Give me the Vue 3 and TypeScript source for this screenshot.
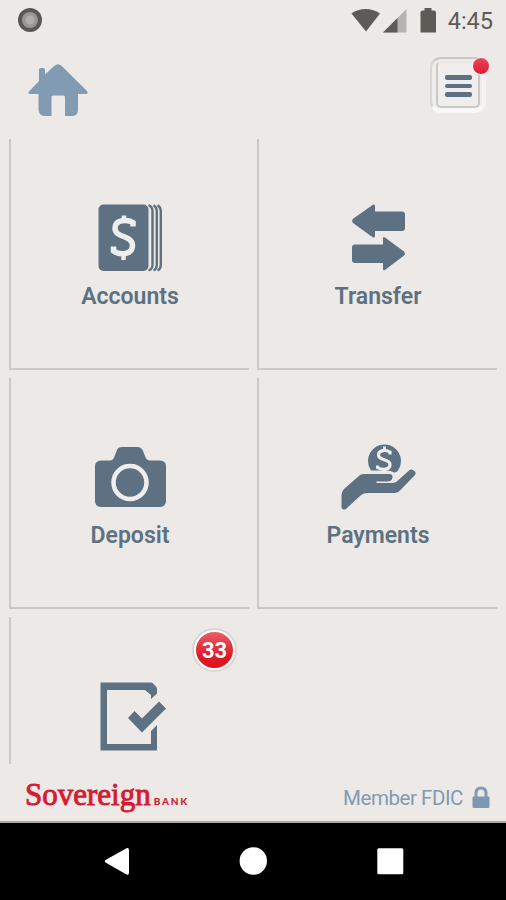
<script setup lang="ts">
type IconName = 'accounts' | 'transfer' | 'deposit' | 'payments' | 'tasks'

interface Tile {
  icon: IconName
  label?: string
  badge?: number
}

const tiles: Tile[] = [
  { icon: 'accounts', label: 'Accounts' },
  { icon: 'transfer', label: 'Transfer' },
  { icon: 'deposit', label: 'Deposit' },
  { icon: 'payments', label: 'Payments' },
  { icon: 'tasks', badge: 33 },
]
</script>

<template>
  <div class="screen">
    <div class="status">
      <svg class="recorder" width="24" height="24" viewBox="0 0 24 24">
        <circle cx="12" cy="12" r="12" fill="#5a5855" />
        <circle cx="12" cy="12" r="8" fill="#999795" />
        <circle cx="12" cy="12" r="4.5" fill="#b0aeac" />
      </svg>
      <svg class="signals" width="88" height="26" viewBox="0 0 88 26">
        <path d="M0.5 6.500C8 .4 21 .4 29 6.500L15 24.500Z" fill="#5e5b57" />
        <path d="M55.500 2V25.500H32Z" fill="#b5b2af" />
        <path d="M46.500 11V25.500H32Z" fill="#5e5b57" />
        <path d="M73.500 1H80.500V3.500H83Q85 3.500 85 5.500V25.500H69.500V5.500Q69.500 3.500 71.500 3.500H73.500Z" fill="#5e5b57" />
      </svg>
      <span class="clock">4:45</span>
    </div>

    <header class="header">
      <svg width="60" height="53" viewBox="0 0 60 53">
        <path d="M11 17V5.500Q11 4 12.500 4H15.500Q17 4 17 5.500V10.500L26.500 1.800Q30 -1.200 33.500 1.800L59 27Q60.500 29.800 58 30H50V46.500Q49.500 51.500 44.500 52H37V33Q37 31.500 35.500 31.500H25Q23.500 31.500 23.500 33V52H15.500Q11 51 10.500 46V30H2Q-.5 29.800 1 27.500Z" fill="#819bb3" />
      </svg>
      <button class="menu" type="button">
        <span class="menu-face">
          <i></i><i></i><i></i>
        </span>
        <span class="menu-dot"></span>
      </button>
    </header>

    <main class="grid">
      <section v-for="tile in tiles" :key="tile.icon" class="tile">
        <svg class="icon" width="90" height="80" viewBox="0 0 90 80">
          <template v-if="tile.icon === 'accounts'">
            <rect x="13.500" y="4.500" width="50" height="66.500" rx="5" />
            <g class="page-edge">
              <path d="M63.500 5.200Q67.500 7 67.500 11V65Q67.500 69 63.500 70.500" />
              <path d="M68.500 5.200Q71.800 7 71.800 11V65Q71.800 69 68.500 70.500" />
              <path d="M72.500 5.200Q75.800 7 75.800 11V65Q75.800 69 72.500 70.500" />
            </g>
            <path class="cut" d="M48 26.500V22.500C43 19.500 30 19 30 28C30 38.500 47.500 34.500 47.500 45.500C47.500 55 35 55.500 28.500 51V46.500" stroke-width="5.500" />
            <path class="cut" d="M39 15.500V22M38.500 53V60" stroke-width="4.500" />
          </template>
          <template v-else-if="tile.icon === 'transfer'">
            <path d="M19.500 19.500Q18.500 21.300 20 23L40 37.500Q42 38 42 36V31H69Q72 31 72 28V14.500Q72 11.500 69 11.500H42V6Q41.500 4 40 4.800L20 18.800Z" />
            <path d="M71.500 52.500Q72.500 54 71 55.500L52 70Q50 71 50 69V63H22Q19 63 19 60V47.500Q19 44.500 22 44.500H50V38.500Q50 36 52 37.500L71 51.500Z" />
          </template>
          <template v-else-if="tile.icon === 'deposit'">
            <path d="M16 21.500H25Q28.500 21.500 30 16L32 11Q33 8 37 8H52Q56.500 8 58 12L60 17Q61.500 21.500 65 21.500H75Q81 22 81 27V62Q81 67.500 75 68H16Q10 67.500 10 62V27Q10 22 16 21.500Z" />
            <circle class="cut" cx="45" cy="43.500" r="16.500" stroke-width="4.500" />
          </template>
          <template v-else-if="tile.icon === 'payments'">
            <path d="M38 31.500A16.500 16.500 0 1 1 65 31.500Q62.500 34.500 60 33Q58 31.500 55 31.500Z" />
            <path class="cut" d="M57 15.500V13C53 10.500 45.500 11 45.500 16C45.500 22 57 19.500 57 25.500C57 31 49 31.500 44.500 28.500V26.500" stroke-width="3.200" />
            <path class="cut" d="M51.500 7.500V12.500M51 29V33" stroke-width="2.800" />
            <path d="M27 36Q29 35 32 35H57Q60 35.200 59.500 38.500Q59 42.500 54 42.500H43.500V44H60Q63 44 66 40.500L76 31.500Q78 30 80 31Q84 33 82 36L67.500 51Q65 54 61 54H34Q30 54 27 57L14 69Q11.500 71.500 9.500 70Q8.500 69.500 8.500 68V56Q8.500 53 11 50Z" />
          </template>
          <template v-else>
            <path d="M15.500 4.500H66Q67 4.500 68 5.500L71 8.500Q72 10 72 11.500V15.500L66 21V17L60 12H22V66H66V53L72 47V72.500H15.500Z" />
            <path d="M43 40L49.500 33L57 40.500L74 23.500L81 30.500L57 54.500Z" />
          </template>
        </svg>
        <span v-if="tile.label" class="label">{{ tile.label }}</span>
        <span v-if="tile.badge" class="badge">{{ tile.badge }}</span>
      </section>
    </main>

    <footer class="footer">
      <div class="brand">
        <span class="brand-name">Sovereign</span>
        <span class="brand-kind">BANK</span>
      </div>
      <div class="member">
        <span>Member FDIC</span>
        <svg width="18" height="22" viewBox="0 0 18 22">
          <path d="M4 12V7Q4 2 9 2T14 7V12" fill="none" stroke="#819bb3" stroke-width="3" />
          <rect x=".5" y="10.500" width="17" height="11.500" rx="1" fill="#7c98b2" />
        </svg>
      </div>
    </footer>

    <nav class="nav">
      <svg width="506" height="77" viewBox="0 0 506 77" fill="#fff">
        <path d="M105.500 37Q104 38.300 105.500 39.500L126.500 51.500Q129 52.300 129 50V27Q129 24.300 126.500 25.200Z" />
        <circle cx="253.300" cy="38" r="13.700" />
        <rect x="377.300" y="25.300" width="26" height="26" rx="1.500" />
      </svg>
    </nav>
  </div>
</template>

<style>
body {
  margin: 0;
  background: #ece9e6;
}
</style>

<style scoped>
.screen {
  display: flex;
  flex-direction: column;
  box-sizing: border-box;
  width: 506px;
  height: 900px;
  overflow: hidden;
  background: #ece9e6;
  color: #5d7183;
  font-family: Roboto, "Liberation Sans", sans-serif;
}

.status {
  display: flex;
  align-items: center;
  height: 40px;
  padding: 0 13px 0 18px;
}

.signals {
  margin-left: auto;
}

.clock {
  margin-left: 9px;
  padding-top: 2px;
  color: #5e5b57;
  font-size: 23.5px;
  line-height: 28px;
}

.header {
  display: flex;
  align-items: flex-start;
  justify-content: space-between;
  box-sizing: border-box;
  height: 99px;
  padding: 24px 20px 0 28px;
}

.menu {
  position: relative;
  box-sizing: border-box;
  width: 56px;
  height: 56px;
  margin-top: -7px;
  padding: 2px 0 0 4px;
  border: 2px solid #f5f4f3;
  border-top-color: #c9c8c6;
  border-left-color: #d8d6d4;
  border-right-width: 4px;
  border-bottom: 5px solid #f8f8f7;
  border-radius: 11px;
  background: #efedeb;
}

.menu-face {
  display: flex;
  flex-direction: column;
  align-items: center;
  justify-content: center;
  gap: 4px;
  box-sizing: border-box;
  width: 44px;
  height: 47px;
  border: 2px solid #c9c9c8;
  border-top-color: #e8e7e5;
  border-radius: 5px;
  background: #efeeec;
}

.menu-face i {
  position: relative;
  top: 1.500px;
  width: 27px;
  height: 4.600px;
  border-radius: 2px;
  background: #5d7183;
}

.menu-dot {
  position: absolute;
  top: -2px;
  right: -8px;
  width: 16px;
  height: 16px;
  border: 1.500px solid #f6f0ee;
  border-radius: 50%;
  background: linear-gradient(#e8485c, #df1932);
}

.grid {
  display: grid;
  grid-template-columns: 240px 240px;
  grid-auto-rows: 231px;
  gap: 8px;
  height: 625px;
  padding-left: 9px;
  overflow: hidden;
}

.tile {
  position: relative;
  display: flex;
  flex-direction: column;
  align-items: center;
  box-sizing: border-box;
  padding-top: 61px;
  border-left: 2px solid #cbc8c6;
  border-bottom: 2px solid #cbc8c6;
}

.icon {
  flex: none;
  fill: #5d7183;
}

.cut {
  fill: none;
  stroke: #f0eeed;
}

.page-edge {
  fill: none;
  stroke: #5d7183;
  stroke-width: 2.400px;
}

.label {
  margin-top: 3px;
  font-size: 23px;
  font-weight: 600;
  line-height: 28px;
}

.badge {
  position: absolute;
  top: 13px;
  left: 183px;
  width: 37px;
  height: 36px;
  border: 2px solid #fff;
  border-radius: 50%;
  background: linear-gradient(#e8606a, #e11b26 65%, #df101c);
  box-shadow: 0 0 0 2px #d8d5d2;
  color: #fff;
  font: 700 22px/37px Roboto, "Liberation Sans", sans-serif;
  text-align: center;
}

.footer {
  display: flex;
  justify-content: space-between;
  box-sizing: border-box;
  height: 59px;
  padding: 0 16px 0 25px;
  border-bottom: 2px solid #aaa8a5;
}

.brand {
  display: flex;
  align-items: baseline;
  padding-top: 12px;
  color: #d71931;
}

.brand-name {
  font: 400 31px/38px "Liberation Serif", serif;
  -webkit-text-stroke: 0.900px #d71931;
}

.brand-kind {
  margin-left: 3px;
  font: 900 10px/12px Lato, sans-serif;
  letter-spacing: 1.800px;
}

.member {
  display: flex;
  align-items: flex-start;
  gap: 9px;
  padding-top: 22px;
  color: #819bb3;
  font-size: 20.5px;
  letter-spacing: -0.450px;
  line-height: 24px;
}

.nav {
  height: 77px;
  background: #000;
}
</style>
